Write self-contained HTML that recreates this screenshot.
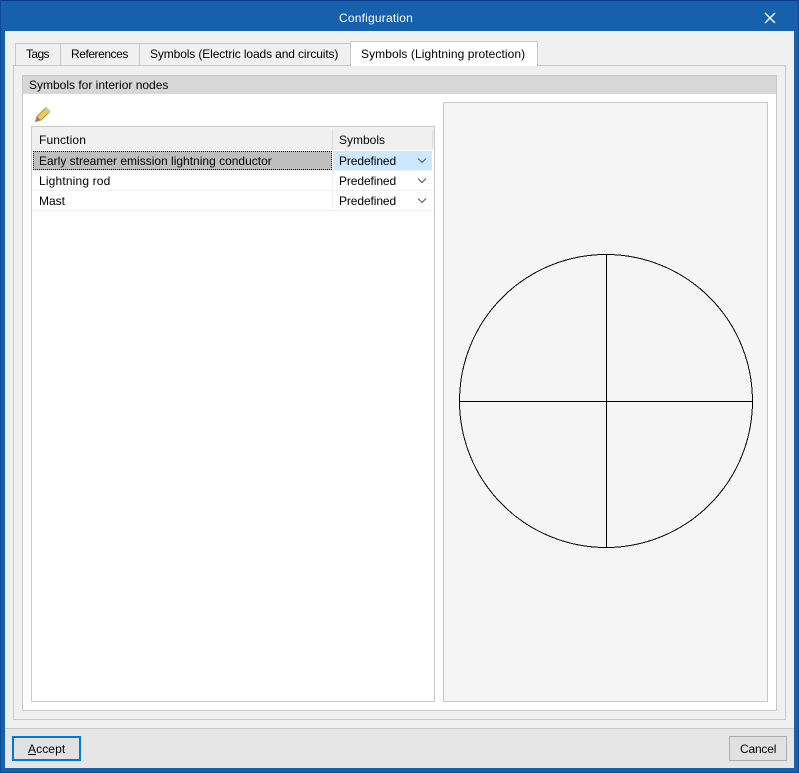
<!DOCTYPE html>
<html><head><meta charset="utf-8"><title>Configuration</title>
<style>
html,body{margin:0;padding:0;width:799px;height:773px;overflow:hidden}
body{position:relative;background:#1760ab;font:12px "Liberation Sans",sans-serif;color:#000}
div{position:absolute;box-sizing:border-box}
.t{white-space:nowrap;line-height:16px;height:16px}
.tab{background:#f0f0f0;border:1px solid #c8c8c8;border-bottom:0;top:43px;height:22px}
.ln{background:#f0f0f0;height:1px}
</style></head><body>
<div style="left:0;top:0;width:799px;height:1px;background:#0b3a8c"></div>
<div style="left:0;top:0;width:1px;height:773px;background:#0b4a94"></div>
<div style="left:798px;top:0;width:1px;height:773px;background:#0b4a94"></div>
<div style="left:0;top:772px;width:799px;height:1px;background:#0b4a94"></div>
<div class="t" style="left:339px;top:10px;color:#fff;letter-spacing:.2px">Configuration</div>
<svg style="position:absolute;left:764px;top:12px" width="12" height="12"><path d="M1 1L11 11M11 1L1 11" stroke="#fff" stroke-width="1.4" fill="none"/></svg>
<div style="left:5px;top:31px;width:789px;height:737px;background:#f0f0f0"></div>
<div style="left:5px;top:728px;width:789px;height:40px;background:#e6e6e6;border-top:1px solid #c8c8c8"></div>

<div style="left:13px;top:65px;width:773px;height:655px;border:1px solid #c8c8c8"></div>
<div class="tab" style="left:15px;width:46px"></div>
<div class="tab" style="left:60px;width:80px"></div>
<div class="tab" style="left:139px;width:212px"></div>
<div style="left:350px;top:41px;width:188px;height:25px;background:#fff;border:1px solid #c8c8c8;border-bottom:0"></div>
<div class="t" style="left:26px;top:46px;letter-spacing:-.6px">Tags</div>
<div class="t" style="left:71px;top:46px;letter-spacing:-.45px">References</div>
<div class="t" style="left:150px;top:46px;letter-spacing:-.12px">Symbols (Electric loads and circuits)</div>
<div class="t" style="left:361px;top:46px;letter-spacing:.07px">Symbols (Lightning protection)</div>

<div style="left:22px;top:75px;width:755px;height:636px;background:#fff;border:1px solid #c8c8c8"></div>
<div style="left:22px;top:75px;width:755px;height:19px;background:#d7d7d7;border:1px solid #c8c8c8;border-bottom:0"></div>
<div class="t" style="left:29px;top:77px;letter-spacing:0">Symbols for interior nodes</div>

<svg style="position:absolute;left:34px;top:105px" width="18" height="18" viewBox="0 0 18 18">
<path d="M1.5 16.5L3 11.5L12 2.5L16 6.5L7 15Z" fill="#f0cc3c" stroke="#a09468" stroke-width="1"/>
<path d="M1.5 16.5L3 11.5L6.5 15Z" fill="#85857a"/>
<path d="M12 2L16.5 6.5L14.8 8.2L10.3 3.7Z" fill="#d5c79c"/>
</svg>

<div style="left:31px;top:126px;width:404px;height:576px;background:#fff;border:1px solid #c8c8c8"></div>
<div style="left:32px;top:127px;width:402px;height:23px;background:#f0f0f0"></div>
<div style="left:332px;top:131px;width:1px;height:19px;background:#dcdcdc"></div>
<div style="left:432px;top:131px;width:1px;height:16px;background:#dcdcdc"></div>
<div class="t" style="left:39px;top:132px;letter-spacing:.12px">Function</div>
<div class="t" style="left:339px;top:132px;letter-spacing:0">Symbols</div>

<div style="left:33px;top:151px;width:299px;height:19px;background:#bfbfbf;border:1px dotted #111"></div>
<div style="left:333px;top:151px;width:99px;height:19px;background:#cce8ff"></div>
<div class="ln" style="left:32px;top:170px;width:402px"></div>
<div class="ln" style="left:32px;top:190px;width:402px"></div>
<div class="ln" style="left:32px;top:210px;width:402px"></div>
<div style="left:332px;top:170px;width:1px;height:40px;background:#f0f0f0"></div>
<div class="t" style="left:39px;top:153px;letter-spacing:0">Early streamer emission lightning conductor</div>
<div class="t" style="left:39px;top:173px;letter-spacing:.16px">Lightning rod</div>
<div class="t" style="left:39px;top:193px;letter-spacing:0">Mast</div>
<div class="t" style="left:339px;top:153px;letter-spacing:-.1px">Predefined</div>
<div class="t" style="left:339px;top:173px;letter-spacing:-.1px">Predefined</div>
<div class="t" style="left:339px;top:193px;letter-spacing:-.1px">Predefined</div>
<svg style="position:absolute;left:417px;top:157px" width="10" height="50" fill="none" stroke="#555" stroke-width="1"><path d="M1 1.5L5 5.5L9 1.5M1 21.5L5 25.5L9 21.5M1 41.5L5 45.5L9 41.5"/></svg>

<div style="left:443px;top:102px;width:325px;height:600px;background:#f5f5f5;border:1px solid #c8c8c8"></div>
<svg style="position:absolute;left:443px;top:102px" width="325" height="600" fill="none" stroke="#000" stroke-width="1" shape-rendering="crispEdges">
<circle cx="163" cy="299" r="146.5"/>
<path d="M163.5 152V446M16.5 299.5H310"/>
</svg>

<div style="left:12px;top:736px;width:69px;height:25px;background:#e1e1e1;border:2px solid #0078d7"></div>
<div class="t" style="left:28px;top:741px;letter-spacing:.1px"><span style="text-decoration:underline">A</span>ccept</div>
<div style="left:729px;top:736px;width:58px;height:25px;background:#e1e1e1;border:1px solid #adadad"></div>
<div class="t" style="left:740px;top:741px;letter-spacing:-.2px">Cancel</div>
</body></html>
